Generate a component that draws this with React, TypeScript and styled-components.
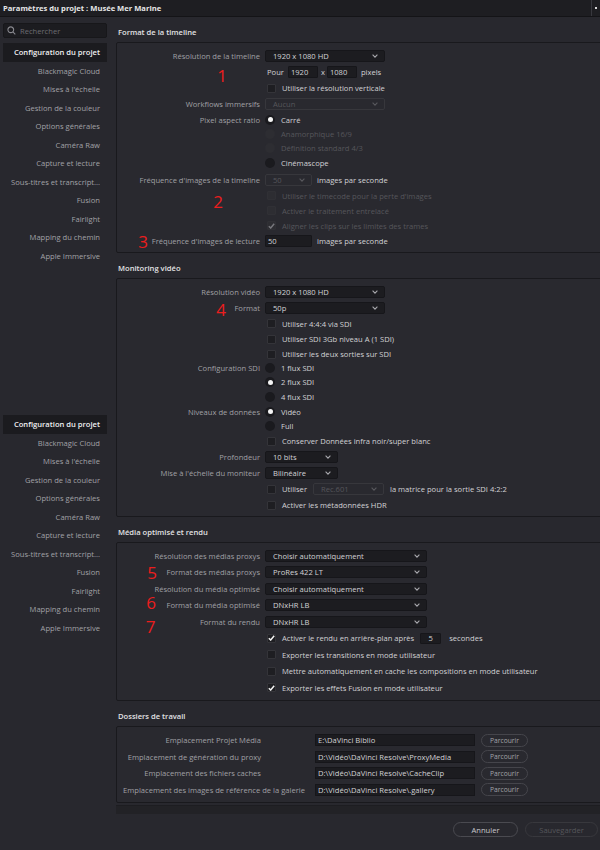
import React from "react";
import styled, { createGlobalStyle } from "styled-components";

const C = {
  bg: "#28282e",
  titleBg: "#1e1e22",
  boxBg: "#29292f",
  border: "#19191d",
  field: "#1c1c20",
  label: "#a0a0a5",
  text: "#d2d2d5",
  dim: "#56565b",
  red: "#ec1d1d",
};

const GlobalStyle = createGlobalStyle`
  html, body { margin: 0; padding: 0; background: ${C.bg}; }
  body { font-family: "Open Sans", "DejaVu Sans", sans-serif; }
  * { box-sizing: border-box; }
`;

const Window = styled.div`
  width: 600px;
  height: 850px;
  overflow: hidden;
  display: flex;
  flex-direction: column;
  background: ${C.bg};
  font-size: 7.6px;
  color: ${C.text};
`;

const TitleBar = styled.div`
  height: 17px;
  flex: none;
  display: flex;
  align-items: center;
  background: ${C.titleBg};
  border-bottom: 1px solid #141417;
  padding-left: 3px;
`;

const TitleText = styled.span`
  font-weight: 700;
  color: #e6e6e8;
  white-space: nowrap;
`;

const TitleGrip = styled.span`
  margin-left: auto;
  width: 9px;
  height: 100%;
  border-left: 1px solid #38383e;
  display: flex;
  align-items: center;
  justify-content: center;
  &::after {
    content: "";
    width: 2px;
    height: 2px;
    background: #d8d8d8;
  }
`;

const Body = styled.div`
  flex: 1;
  min-height: 0;
  display: flex;
`;

const Sidebar = styled.div`
  width: 113px;
  flex: none;
  padding: 6px 6px 0 3px;
  display: flex;
  flex-direction: column;
`;

const SearchBox = styled.div`
  height: 15px;
  display: flex;
  align-items: center;
  gap: 4px;
  padding-left: 3px;
  background: ${C.field};
  border: 1px solid #17171a;
  border-radius: 2px;
  color: #6c6c72;
`;

const NavList = styled.div<{ $mt: number }>`
  margin-top: ${(p) => p.$mt}px;
  display: flex;
  flex-direction: column;
`;

const NavItem = styled.div<{ $active?: boolean }>`
  height: 18.5px;
  display: flex;
  align-items: center;
  justify-content: flex-end;
  padding-right: 7px;
  white-space: nowrap;
  background: ${(p) => (p.$active ? "#1b1b1f" : "transparent")};
  color: ${(p) => (p.$active ? "#f0f0f2" : "#a2a2a7")};
  font-weight: ${(p) => (p.$active ? 600 : 400)};
`;

const Main = styled.div`
  flex: 1;
  min-width: 0;
  overflow: hidden;
  padding-left: 3px;
  display: flex;
  flex-direction: column;
`;

const Section = styled.section`
  display: flex;
  flex-direction: column;
`;

const SectionTitle = styled.div`
  height: 25px;
  flex: none;
  padding: 9px 0 0 2px;
  line-height: 12px;
  font-weight: 600;
  color: #e2e2e4;
  white-space: nowrap;
`;

const Box = styled.div<{ $pt: number; $pb: number }>`
  position: relative;
  width: 520px;
  padding: ${(p) => p.$pt}px 0 ${(p) => p.$pb}px 0;
  background: ${C.boxBg};
  border: 1px solid ${C.border};
  border-radius: 2px;
`;

const Row = styled.div<{ $h: number; $lw?: number }>`
  height: ${(p) => p.$h}px;
  display: grid;
  grid-template-columns: ${(p) => p.$lw ?? 143}px 1fr;
  column-gap: ${(p) => (p.$lw ? 4 : 5)}px;
  align-items: center;
`;

const Label = styled.div<{ $pr?: number }>`
  text-align: right;
  white-space: nowrap;
  color: ${C.label};
  padding-right: ${(p) => p.$pr ?? 0}px;
`;

const Controls = styled.div`
  display: flex;
  align-items: center;
  white-space: nowrap;
  min-width: 0;
`;

const Text = styled.span<{ $dim?: boolean; $ml?: number }>`
  color: ${(p) => (p.$dim ? C.dim : C.text)};
  margin-left: ${(p) => p.$ml ?? 0}px;
  white-space: nowrap;
`;

const SelectBox = styled.div<{ $w: number; $disabled?: boolean }>`
  width: ${(p) => p.$w}px;
  height: 12px;
  flex: none;
  display: flex;
  align-items: center;
  justify-content: space-between;
  padding: 0 6px 0 7px;
  background: ${(p) => (p.$disabled ? "transparent" : C.field)};
  border: 1px solid ${(p) => (p.$disabled ? "#37373c" : "#16161a")};
  border-radius: 2px;
  color: ${(p) => (p.$disabled ? C.dim : C.text)};
`;

const ChevronSvg = styled.svg<{ $dim?: boolean }>`
  width: 6px;
  height: 4px;
  flex: none;
  fill: none;
  stroke: ${(p) => (p.$dim ? "#58585d" : "#a8a8ad")};
  stroke-width: 1.1;
`;

const Field = styled.div<{ $w: number; $center?: boolean }>`
  width: ${(p) => p.$w}px;
  height: 11.5px;
  flex: none;
  display: flex;
  align-items: center;
  justify-content: ${(p) => (p.$center ? "center" : "flex-start")};
  padding-left: ${(p) => (p.$center ? 0 : 2)}px;
  background: ${C.field};
  border: 1px solid #16161a;
  border-radius: 1px;
  color: ${C.text};
`;

const CheckBox = styled.span<{ $disabled?: boolean }>`
  width: 9px;
  height: 9px;
  flex: none;
  margin: 0 6px 0 2px;
  display: flex;
  align-items: center;
  justify-content: center;
  background: ${(p) => (p.$disabled ? "#2d2d32" : "#1e1e22")};
  border: 1px solid ${(p) => (p.$disabled ? "#303035" : "#343439")};
  border-radius: 1px;
`;

const CheckSvg = styled.svg<{ $dim?: boolean }>`
  width: 7px;
  height: 6px;
  fill: none;
  stroke: ${(p) => (p.$dim ? "#77777c" : "#f4f4f4")};
  stroke-width: 1.5;
`;

const RadioDot = styled.span<{ $on?: boolean; $disabled?: boolean }>`
  width: 10px;
  height: 10px;
  flex: none;
  margin-right: 6px;
  border-radius: 50%;
  display: flex;
  align-items: center;
  justify-content: center;
  background: ${(p) => (p.$disabled ? "#2d2d32" : "#1a1a1e")};
  &::after {
    content: "";
    display: ${(p) => (p.$on ? "block" : "none")};
    width: 5px;
    height: 5px;
    border-radius: 50%;
    background: #f4f4f4;
  }
`;

const Annot = styled.div<{ $x: number; $y: number }>`
  position: absolute;
  left: ${(p) => p.$x}px;
  top: ${(p) => p.$y}px;
  transform: translate(-50%, -50%);
  height: 13px;
  font-size: 17px;
  line-height: 13px;
  color: ${C.red};
  pointer-events: none;
`;

const PathField = styled.div`
  width: 160px;
  height: 12px;
  flex: none;
  display: flex;
  align-items: center;
  padding-left: 2px;
  background: ${C.field};
  border: 1px solid #16161a;
  color: ${C.text};
`;

const BrowseButton = styled.button`
  margin-left: 6px;
  width: 47px;
  height: 13px;
  padding: 0;
  font-family: inherit;
  font-size: 6.7px;
  color: #a4a4a9;
  background: transparent;
  border: 1px solid #45454b;
  border-radius: 7px;
`;

const ScrollStrip = styled.div`
  margin-top: 2px;
  width: 520px;
  height: 9px;
  background: #222226;
  border-top: 1px solid #1d1d21;
`;

const Footer = styled.div`
  display: flex;
  justify-content: flex-end;
  gap: 7px;
  padding: 8px 2px 0 0;
`;

const FooterButton = styled.button<{ $w: number; $disabled?: boolean }>`
  width: ${(p) => p.$w}px;
  height: 15px;
  padding: 0;
  font-family: inherit;
  font-size: 7.6px;
  background: transparent;
  color: ${(p) => (p.$disabled ? "#57575c" : "#c9c9cd")};
  border: 1px solid ${(p) => (p.$disabled ? "#38383d" : "#4a4a50")};
  border-radius: 8px;
`;

const Chevron = ({ dim }: { dim?: boolean }) => (
  <ChevronSvg viewBox="0 0 6 4" $dim={dim}>
    <path d="M0.6 0.6 L3 3.1 L5.4 0.6" />
  </ChevronSvg>
);

const Select = ({ w, value, disabled }: { w: number; value: string; disabled?: boolean }) => (
  <SelectBox $w={w} $disabled={disabled}>
    <span>{value}</span>
    <Chevron dim={disabled} />
  </SelectBox>
);

const Check = ({ checked, disabled }: { checked?: boolean; disabled?: boolean }) => (
  <CheckBox $disabled={disabled}>
    {checked && (
      <CheckSvg viewBox="0 0 7 6" $dim={disabled}>
        <path d="M0.8 3.2 L2.7 5 L6.2 0.8" />
      </CheckSvg>
    )}
  </CheckBox>
);

const SearchIcon = () => (
  <svg width="9" height="9" viewBox="0 0 10 10" fill="none" stroke="#8a8a90" strokeWidth="1.2">
    <circle cx="4.2" cy="4.2" r="3.2" />
    <path d="M6.6 6.6 L9.2 9.2" />
  </svg>
);

const navItems = [
  "Configuration du projet",
  "Blackmagic Cloud",
  "Mises à l'échelle",
  "Gestion de la couleur",
  "Options générales",
  "Caméra Raw",
  "Capture et lecture",
  "Sous-titres et transcript...",
  "Fusion",
  "Fairlight",
  "Mapping du chemin",
  "Apple Immersive",
];

const Nav = ({ mt }: { mt: number }) => (
  <NavList $mt={mt}>
    {navItems.map((n, i) => (
      <NavItem key={n} $active={i === 0}>
        {n}
      </NavItem>
    ))}
  </NavList>
);

const folders = [
  { label: "Emplacement Projet Média", path: "E:\\DaVinci Biblio", pr: 50 },
  { label: "Emplacement de génération du proxy", path: "D:\\Vidéo\\DaVinci Resolve\\ProxyMedia", pr: 50 },
  { label: "Emplacement des fichiers caches", path: "D:\\Vidéo\\DaVinci Resolve\\CacheClip", pr: 50 },
  {
    label: "Emplacement des images de référence de la galerie",
    path: "D:\\Vidéo\\DaVinci Resolve\\.gallery",
    pr: 6,
  },
];

export default function App() {
  return (
    <Window>
      <GlobalStyle />
      <TitleBar>
        <TitleText>Paramètres du projet : Musée Mer Marine</TitleText>
        <TitleGrip />
      </TitleBar>
      <Body>
        <Sidebar>
          <SearchBox>
            <SearchIcon />
            <span>Rechercher</span>
          </SearchBox>
          <Nav mt={5} />
          <Nav mt={150} />
        </Sidebar>

        <Main>
          <Section>
            <SectionTitle>Format de la timeline</SectionTitle>
            <Box $pt={4} $pb={3}>
              <Row $h={17}>
                <Label>Résolution de la timeline</Label>
                <Controls>
                  <Select w={120} value="1920 x 1080 HD" />
                </Controls>
              </Row>
              <Row $h={16}>
                <Label />
                <Controls>
                  <Text $ml={2}>Pour</Text>
                  <Field $w={30} style={{ marginLeft: 4 }}>1920</Field>
                  <Text $ml={3}>x</Text>
                  <Field $w={30} style={{ marginLeft: 2 }}>1080</Field>
                  <Text $ml={4}>pixels</Text>
                </Controls>
              </Row>
              <Row $h={16}>
                <Label />
                <Controls>
                  <Check />
                  <Text>Utiliser la résolution verticale</Text>
                </Controls>
              </Row>
              <Row $h={16}>
                <Label>Workflows immersifs</Label>
                <Controls>
                  <Select w={120} value="Aucun" disabled />
                </Controls>
              </Row>
              <Row $h={15}>
                <Label>Pixel aspect ratio</Label>
                <Controls>
                  <RadioDot $on />
                  <Text>Carré</Text>
                </Controls>
              </Row>
              <Row $h={14}>
                <Label />
                <Controls>
                  <RadioDot $disabled />
                  <Text $dim>Anamorphique 16/9</Text>
                </Controls>
              </Row>
              <Row $h={14}>
                <Label />
                <Controls>
                  <RadioDot $disabled />
                  <Text $dim>Définition standard 4/3</Text>
                </Controls>
              </Row>
              <Row $h={16}>
                <Label />
                <Controls>
                  <RadioDot />
                  <Text>Cinémascope</Text>
                </Controls>
              </Row>
              <Row $h={17}>
                <Label>Fréquence d'images de la timeline</Label>
                <Controls>
                  <Select w={47} value="50" disabled />
                  <Text $ml={5}>images par seconde</Text>
                </Controls>
              </Row>
              <Row $h={15}>
                <Label />
                <Controls>
                  <Check disabled />
                  <Text $dim>Utiliser le timecode pour la perte d'images</Text>
                </Controls>
              </Row>
              <Row $h={15}>
                <Label />
                <Controls>
                  <Check disabled />
                  <Text $dim>Activer le traitement entrelacé</Text>
                </Controls>
              </Row>
              <Row $h={15}>
                <Label />
                <Controls>
                  <Check disabled checked />
                  <Text $dim>Aligner les clips sur les limites des trames</Text>
                </Controls>
              </Row>
              <Row $h={16}>
                <Label>Fréquence d'images de lecture</Label>
                <Controls>
                  <Field $w={47}>50</Field>
                  <Text $ml={5}>images par seconde</Text>
                </Controls>
              </Row>
              <Annot $x={105} $y={32}>1</Annot>
              <Annot $x={101} $y={158}>2</Annot>
              <Annot $x={26} $y={198}>3</Annot>
            </Box>
          </Section>

          <Section>
            <SectionTitle>Monitoring vidéo</SectionTitle>
            <Box $pt={5} $pb={3}>
              <Row $h={16}>
                <Label>Résolution vidéo</Label>
                <Controls>
                  <Select w={120} value="1920 x 1080 HD" />
                </Controls>
              </Row>
              <Row $h={16}>
                <Label>Format</Label>
                <Controls>
                  <Select w={120} value="50p" />
                </Controls>
              </Row>
              <Row $h={15}>
                <Label />
                <Controls>
                  <Check />
                  <Text>Utiliser 4:4:4 via SDI</Text>
                </Controls>
              </Row>
              <Row $h={16}>
                <Label />
                <Controls>
                  <Check />
                  <Text>Utiliser SDI 3Gb niveau A (1 SDI)</Text>
                </Controls>
              </Row>
              <Row $h={14}>
                <Label />
                <Controls>
                  <Check />
                  <Text>Utiliser les deux sorties sur SDI</Text>
                </Controls>
              </Row>
              <Row $h={14}>
                <Label>Configuration SDI</Label>
                <Controls>
                  <RadioDot />
                  <Text>1 flux SDI</Text>
                </Controls>
              </Row>
              <Row $h={14}>
                <Label />
                <Controls>
                  <RadioDot $on />
                  <Text>2 flux SDI</Text>
                </Controls>
              </Row>
              <Row $h={15}>
                <Label />
                <Controls>
                  <RadioDot />
                  <Text>4 flux SDI</Text>
                </Controls>
              </Row>
              <Row $h={15}>
                <Label>Niveaux de données</Label>
                <Controls>
                  <RadioDot $on />
                  <Text>Vidéo</Text>
                </Controls>
              </Row>
              <Row $h={14}>
                <Label />
                <Controls>
                  <RadioDot />
                  <Text>Full</Text>
                </Controls>
              </Row>
              <Row $h={16}>
                <Label />
                <Controls>
                  <Check />
                  <Text>Conserver Données infra noir/super blanc</Text>
                </Controls>
              </Row>
              <Row $h={16}>
                <Label>Profondeur</Label>
                <Controls>
                  <Select w={73} value="10 bits" />
                </Controls>
              </Row>
              <Row $h={16}>
                <Label>Mise à l'échelle du moniteur</Label>
                <Controls>
                  <Select w={73} value="Bilinéaire" />
                </Controls>
              </Row>
              <Row $h={16}>
                <Label />
                <Controls>
                  <Check />
                  <Text style={{ marginRight: 6 }}>Utiliser</Text>
                  <Select w={71} value="Rec.601" disabled />
                  <Text $ml={6}>la matrice pour la sortie SDI 4:2:2</Text>
                </Controls>
              </Row>
              <Row $h={16}>
                <Label />
                <Controls>
                  <Check />
                  <Text>Activer les métadonnées HDR</Text>
                </Controls>
              </Row>
              <Annot $x={104} $y={30}>4</Annot>
            </Box>
          </Section>

          <Section>
            <SectionTitle>Média optimisé et rendu</SectionTitle>
            <Box $pt={4.5} $pb={4}>
              <Row $h={16.5}>
                <Label>Résolution des médias proxys</Label>
                <Controls>
                  <Select w={162} value="Choisir automatiquement" />
                </Controls>
              </Row>
              <Row $h={16.5}>
                <Label>Format des médias proxys</Label>
                <Controls>
                  <Select w={162} value="ProRes 422 LT" />
                </Controls>
              </Row>
              <Row $h={16.5}>
                <Label>Résolution du média optimisé</Label>
                <Controls>
                  <Select w={162} value="Choisir automatiquement" />
                </Controls>
              </Row>
              <Row $h={16.5}>
                <Label>Format du média optimisé</Label>
                <Controls>
                  <Select w={162} value="DNxHR LB" />
                </Controls>
              </Row>
              <Row $h={16.5}>
                <Label>Format du rendu</Label>
                <Controls>
                  <Select w={162} value="DNxHR LB" />
                </Controls>
              </Row>
              <Row $h={16.5}>
                <Label />
                <Controls>
                  <Check checked />
                  <Text style={{ marginRight: 6 }}>Activer le rendu en arrière-plan après</Text>
                  <Field $w={21} $center>5</Field>
                  <Text $ml={8}>secondes</Text>
                </Controls>
              </Row>
              <Row $h={16.5}>
                <Label />
                <Controls>
                  <Check />
                  <Text>Exporter les transitions en mode utilisateur</Text>
                </Controls>
              </Row>
              <Row $h={16.5}>
                <Label />
                <Controls>
                  <Check />
                  <Text>Mettre automatiquement en cache les compositions en mode utilisateur</Text>
                </Controls>
              </Row>
              <Row $h={16.5}>
                <Label />
                <Controls>
                  <Check checked />
                  <Text>Exporter les effets Fusion en mode utilisateur</Text>
                </Controls>
              </Row>
              <Annot $x={35} $y={29}>5</Annot>
              <Annot $x={34} $y={58.5}>6</Annot>
              <Annot $x={33.5} $y={82.5}>7</Annot>
            </Box>
          </Section>

          <Section>
            <SectionTitle>Dossiers de travail</SectionTitle>
            <Box $pt={5} $pb={4}>
              {folders.map((f) => (
                <Row key={f.label} $h={16.5} $lw={194}>
                  <Label $pr={f.pr}>{f.label}</Label>
                  <Controls>
                    <PathField>{f.path}</PathField>
                    <BrowseButton>Parcourir</BrowseButton>
                  </Controls>
                </Row>
              ))}
            </Box>
          </Section>

          <ScrollStrip />
          <Footer>
            <FooterButton $w={65}>Annuler</FooterButton>
            <FooterButton $w={73} $disabled>
              Sauvegarder
            </FooterButton>
          </Footer>
        </Main>
      </Body>
    </Window>
  );
}
